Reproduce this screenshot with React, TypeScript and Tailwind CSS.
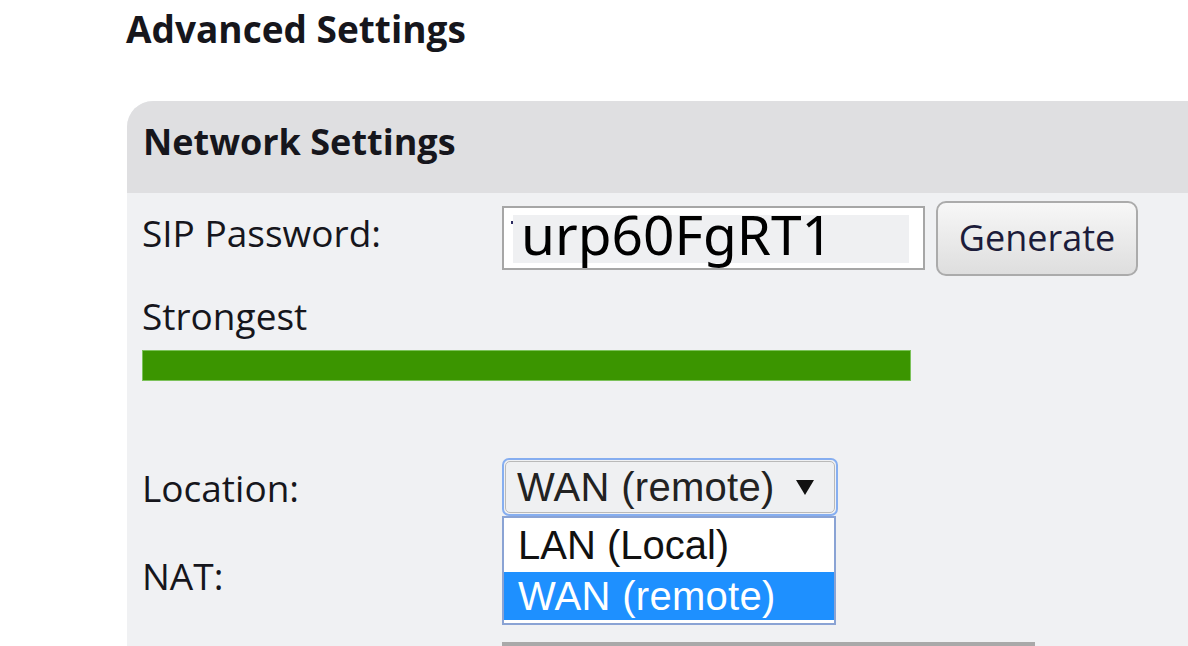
import React from "react";

export default function App() {
  return (
    <div
      className="w-[1188px] h-[646px] overflow-hidden bg-white text-[#16161c]"
      style={{ fontFamily: '"Open Sans", "Noto Sans", sans-serif' }}
    >
      <div className="pl-[126px] pt-[10px] text-[37px] leading-[37px] font-bold">
        Advanced Settings
      </div>
      <div className="ml-[127px] mt-[54px] rounded-tl-[26px] overflow-hidden bg-[#f0f1f3] h-[600px]">
        <div className="h-[92px] bg-[#dfdfe1] pl-[16px] pt-[23px]">
          <div className="text-[36px] leading-[36px] font-bold">Network Settings</div>
        </div>
        <div className="pl-[15px] pt-[8px]">
          {/* SIP password row */}
          <div className="flex items-start">
            <div className="w-[360px] mt-[13px] text-[37px] leading-[37px]">SIP Password:</div>
            <div className="mt-[5px] w-[423px] h-[64px] border-2 border-[#a6a6a6] bg-white relative">
              <div className="absolute left-[7px] top-[13px] w-[2px] h-[3px] bg-[#2a2a60]" />
              <div className="ml-[9px] mr-[14px] mt-[7px] h-[48px] bg-[#eff0f2] pl-[8px]">
                <span
                  className="block text-[55px] leading-[38px] text-black whitespace-nowrap"
                  style={{ fontFamily: '"Noto Sans", "Open Sans", sans-serif' }}
                >
                  urp60FgRT1
                </span>
              </div>
            </div>
            <button className="ml-[11px] w-[202px] h-[75px] rounded-[10px] border-2 border-[#ababab] bg-gradient-to-b from-[#f7f7f7] to-[#dedede] text-[36px] leading-[36px] text-[#1c1c3a] flex items-center justify-center pb-[2px]">
              Generate
            </button>
          </div>

          {/* Strength */}
          <div className="mt-[21px] text-[37px] leading-[37px]">Strongest</div>
          <div className="mt-[16px] w-[769px] h-[31px] bg-[#3b9500] border border-[#7cc25a]" />

          {/* Location */}
          <div className="mt-[77px] flex items-start">
            <div className="w-[360px] mt-[11px] text-[37px] leading-[37px]">Location:</div>
            <div className="relative">
              <div className="w-[336px] h-[58px] rounded-[7px] border-2 border-[#86aef0] p-[1px]">
                <div
                  className="h-full rounded-[5px] border border-[#b9b9b9] bg-[#eff0f2] flex items-center pl-[11px] pr-[20px] text-[40px] text-[#222]"
                  style={{ fontFamily: '"Liberation Sans", Arial, sans-serif' }}
                >
                  <span className="leading-[40px] flex-1 tracking-[0.3px]">WAN (remote)</span>
                  <svg width="18" height="15" viewBox="0 0 18 15">
                    <polygon points="0,0 18,0 9,15" fill="#111" />
                  </svg>
                </div>
              </div>
              {/* dropdown list */}
              <div
                className="absolute left-0 top-[58px] w-[334px] border-2 border-[#8aa3d4] bg-white text-[40px] z-10"
                style={{ fontFamily: '"Liberation Sans", Arial, sans-serif' }}
              >
                <div className="h-[54px] pl-[14px] flex items-center text-[#111] leading-[40px]">LAN (Local)</div>
                <div className="h-[48px] pl-[14px] flex items-center bg-[#1e90ff] text-white leading-[40px] tracking-[0.3px]">WAN (remote)</div>
                <div className="h-[3px] bg-white" />
              </div>
            </div>
          </div>

          {/* NAT */}
          <div className="mt-[41px] text-[37px] leading-[37px]">NAT:</div>
          <div className="mt-[48px] ml-[360px] w-[533px] h-[10px] border-t-[4px] border-[#a9a9a9]" />
        </div>
      </div>
    </div>
  );
}
